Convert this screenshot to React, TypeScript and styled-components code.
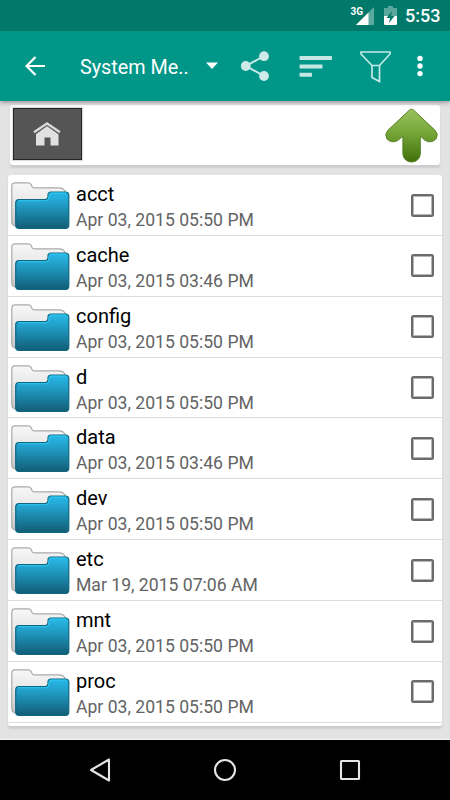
import React from 'react';
import styled, { createGlobalStyle } from 'styled-components';

const GlobalStyle = createGlobalStyle`
  * { box-sizing: border-box; }
  body { margin: 0; background: #e3e3e3; font-family: Roboto, sans-serif; }
  svg { display: block; flex: none; }
`;

const Screen = styled.div`
  width: 450px;
  height: 800px;
  display: flex;
  flex-direction: column;
  background: #e3e3e3;
  overflow: hidden;
`;

const StatusBar = styled.div`
  height: 31px;
  flex: none;
  display: flex;
  align-items: center;
  justify-content: flex-end;
  padding-right: 10px;
  background: #00796b;
  color: #fff;
  position: relative;
  z-index: 2;
`;

const Network = styled.span`
  font-size: 10px;
  font-weight: 700;
  line-height: 12px;
  align-self: flex-start;
  margin-top: 6px;
`;

const SignalIcon = styled.svg`
  margin: 1px 10px 0 -7px;
`;

const BatteryIcon = styled.svg`
  margin-right: 8px;
`;

const Clock = styled.span`
  width: 35px;
  font-size: 18px;
  font-weight: 500;
  line-height: 32px;
  white-space: nowrap;
`;

const AppBar = styled.header`
  height: 70px;
  flex: none;
  display: flex;
  align-items: center;
  padding-left: 24px;
  background: #009688;
  color: #fff;
  box-shadow: 0 1px 5px rgba(0, 0, 0, 0.42);
  position: relative;
`;

const Title = styled.h1`
  width: 125px;
  margin: 3px 0 0 34px;
  font-size: 19.8px;
  font-weight: 400;
  line-height: 28px;
  white-space: nowrap;
`;

const Actions = styled.div`
  display: flex;
  align-items: center;
  margin-left: 21px;
  gap: 28.5px;
`;

const MoreIcon = styled.svg`
  margin-left: -3px;
`;

const Content = styled.main`
  height: 639px;
  flex: none;
  padding: 4px 8px 0;
  border-bottom: 1px solid #f5f5f5;
`;

const Card = styled.section`
  background: #fff;
  border-radius: 3px;
  box-shadow: 0 3px 2px #cdcdcd;
`;

const PathCard = styled(Card)`
  height: 60px;
  margin: 0 2px 10px;
  padding: 3px 2px 0 3px;
  display: flex;
  justify-content: space-between;
`;

const HomeTile = styled.div`
  width: 69px;
  height: 52px;
  display: flex;
  justify-content: center;
  padding: 13px 1px 0 0;
  background: #555;
  border: 1px solid #262626;
  box-shadow: 0 0 1px 1px #ddd;
`;

const FileCard = styled(Card)`
  height: 551px;
`;

const Row = styled.div`
  height: 60.86px;
  display: flex;
  padding-left: 3px;
  border-bottom: 1px solid #dcdcdc;
`;

const FolderIcon = styled.svg`
  margin-top: 7px;
`;

const Details = styled.div`
  flex: 1;
  padding: 6px 0 0 6px;
  white-space: nowrap;
`;

const Name = styled.div`
  color: #000;
  font-size: 20px;
  line-height: 26px;
`;

const Modified = styled.div`
  color: #636363;
  font-size: 17.6px;
  line-height: 26px;
`;

const Checkbox = styled.div`
  width: 23px;
  height: 23px;
  margin: 18.6px 8px 0 0;
  border: 2px solid #6b6b6b;
  border-radius: 2.5px;
  box-shadow: inset 0 0 0 1px #b5b5b5;
`;

const NavBar = styled.nav`
  height: 60px;
  flex: none;
  display: flex;
  align-items: center;
  justify-content: space-between;
  padding: 0 88px;
  background: #000;
`;

const entries = [
  { name: 'acct', modified: 'Apr 03, 2015 05:50 PM' },
  { name: 'cache', modified: 'Apr 03, 2015 03:46 PM' },
  { name: 'config', modified: 'Apr 03, 2015 05:50 PM' },
  { name: 'd', modified: 'Apr 03, 2015 05:50 PM' },
  { name: 'data', modified: 'Apr 03, 2015 03:46 PM' },
  { name: 'dev', modified: 'Apr 03, 2015 05:50 PM' },
  { name: 'etc', modified: 'Mar 19, 2015 07:06 AM' },
  { name: 'mnt', modified: 'Apr 03, 2015 05:50 PM' },
  { name: 'proc', modified: 'Apr 03, 2015 05:50 PM' },
];

const Folder = () => (
  <FolderIcon width="59" height="48" viewBox="0 0 59 48">
    <defs>
      <linearGradient id="folderFront" x1="0" y1="0" x2="0" y2="1">
        <stop offset="0" stopColor="#29b9e9" />
        <stop offset="0.35" stopColor="#219dc6" />
        <stop offset="1" stopColor="#115d75" />
      </linearGradient>
      <linearGradient id="folderBack" x1="0" y1="0" x2="0" y2="1">
        <stop offset="0" stopColor="#f7f7f7" />
        <stop offset="0.5" stopColor="#e6e6e6" />
        <stop offset="1" stopColor="#c4c4c4" />
      </linearGradient>
    </defs>
    <path
      d="M4 .9H17Q19 .9 20 2.4L21.2 4.8Q21.8 5.9 23 5.9H48Q52 5.9 54 9V44H4.5Q.8 43.5 .8 39.5V4.2Q.8 .9 4 .9Z"
      fill="url(#folderBack)"
      stroke="#aaa"
      strokeWidth="1.2"
    />
    <path
      d="M8 17.6H34Q37 17.6 37 14.8V13Q37 10 40 10H54.5Q57.8 10 57.8 13.5V43Q57.8 46.4 54.5 46.4H8Q4.7 46.4 4.7 43V21Q4.7 17.6 8 17.6Z"
      fill="url(#folderFront)"
      stroke="#116780"
      strokeWidth="1.2"
    />
    <path d="M7 18.7H35Q38 18.2 38 15V13.2Q38.2 11.1 40 11.1H55" fill="none" stroke="#2ccbf2" strokeWidth="1" />
  </FolderIcon>
);

export default function App() {
  return (
    <>
      <GlobalStyle />
      <Screen>
        <StatusBar>
          <Network>3G</Network>
          <SignalIcon width="18" height="18" viewBox="0 0 18 18">
            <path d="M0 18 18 0V18Z" fill="#5ca99f" />
            <path d="M0 18 12.5 5.5V18Z" fill="#fff" />
          </SignalIcon>
          <BatteryIcon width="13" height="19" viewBox="0 0 13 19">
            <path d="M4 0H9V2H13V10H0V2H4Z" fill="#59a79d" />
            <path d="M0 10H13V17.8Q13 19 11.8 19H1.2Q0 19 0 17.8Z" fill="#fff" />
            <path d="M8 5 2.5 12H6L5 17 10.5 10H7Z" fill="#00796b" />
          </BatteryIcon>
          <Clock>5:53</Clock>
        </StatusBar>

        <AppBar>
          <svg width="22" height="22" viewBox="0 0 22 22" fill="none" stroke="#fff" strokeWidth="2.2">
            <path d="M21 11H3M11.5 2 2.6 11 11.5 20" />
          </svg>
          <Title>System Me..</Title>
          <svg width="14" height="8" viewBox="0 0 14 8">
            <path d="M1 .5H13L7 7Z" fill="#fff" />
          </svg>
          <Actions>
            <svg width="30" height="30" viewBox="0 0 30 30" fill="#cceae7">
              <path d="M24 5 6 15 24 25" fill="none" stroke="#cceae7" strokeWidth="2" />
              <circle cx="24" cy="5.2" r="4.9" />
              <circle cx="5.8" cy="15" r="4.9" />
              <circle cx="24" cy="25" r="4.9" />
            </svg>
            <svg width="33" height="21" viewBox="0 0 33 21" fill="#c5e7e4">
              <rect x=".5" width="32.5" height="4" rx=".7" />
              <rect x=".5" y="8.4" width="23" height="4" rx=".7" />
              <rect x=".5" y="16.7" width="12.5" height="4" rx=".7" />
            </svg>
            <svg width="31" height="33" viewBox="0 0 31 33" fill="none" stroke="#c5e9e5" strokeWidth="1.7">
              <path d="M1 2H30V4L19.5 15.5V31.5L12 27.5V15.5L1 4ZM12 15.5H19.5" />
            </svg>
            <MoreIcon width="6" height="22" viewBox="0 0 6 22" fill="#fff">
              <circle cx="3" cy="3.4" r="2.7" />
              <circle cx="3" cy="11" r="2.7" />
              <circle cx="3" cy="18.6" r="2.7" />
            </MoreIcon>
          </Actions>
        </AppBar>

        <Content>
          <PathCard>
            <HomeTile>
              <svg width="28" height="24" viewBox="0 0 28 24">
                <path d="M3 12 14 3.8 25.5 12V23.5H17.5V15.5H11.5V23.5H3Z" fill="#e1e1e1" />
                <path d="M1 11.5 14 2.4 27 11.5" fill="none" stroke="#555" strokeWidth="2.8" />
                <path d="M1 10.3 14 1.5 27 10.3" fill="none" stroke="#d9d9d9" strokeWidth="2.3" />
              </svg>
            </HomeTile>
            <svg width="53" height="55" viewBox="0.5 0 53 55">
              <defs>
                <linearGradient id="upArrow" x1="0" y1="0" x2="0" y2="1">
                  <stop offset="0" stopColor="#9bc25e" />
                  <stop offset="0.45" stopColor="#75a637" />
                  <stop offset="1" stopColor="#41700a" />
                </linearGradient>
              </defs>
              <path
                d="M27 1.2Q28.3 1.2 29.4 2.4L50.8 22.5Q54.2 26.5 51.7 30.6C48.5 34.8 42.5 34.8 38.5 30.6L35.8 28V45C35.8 57 18.4 57 18.4 45V28L15.5 30.6C11.5 34.8 5.5 34.8 2.3 30.6Q-.2 26.5 3.2 22.5L24.6 2.4Q25.7 1.2 27 1.2Z"
                fill="url(#upArrow)"
                stroke="#558024"
              />
            </svg>
          </PathCard>

          <FileCard>
            {entries.map(({ name, modified }) => (
              <Row key={name}>
                <Folder />
                <Details>
                  <Name>{name}</Name>
                  <Modified>{modified}</Modified>
                </Details>
                <Checkbox role="checkbox" aria-checked="false" aria-label={name} />
              </Row>
            ))}
          </FileCard>
        </Content>

        <NavBar>
          <svg width="24" height="26" viewBox="0 0 24 26" fill="none" stroke="#e4e4e4" strokeWidth="2.1">
            <path d="M21 2.5V23.5L3 13Z" strokeLinejoin="round" />
          </svg>
          <svg width="24" height="24" viewBox="0 0 24 24" fill="none" stroke="#e4e4e4" strokeWidth="2.1">
            <circle cx="12" cy="12" r="10" />
          </svg>
          <svg width="24" height="24" viewBox="0 0 24 24" fill="none" stroke="#e4e4e4" strokeWidth="2.1">
            <rect x="3" y="3" width="18" height="18" rx=".5" />
          </svg>
        </NavBar>
      </Screen>
    </>
  );
}
